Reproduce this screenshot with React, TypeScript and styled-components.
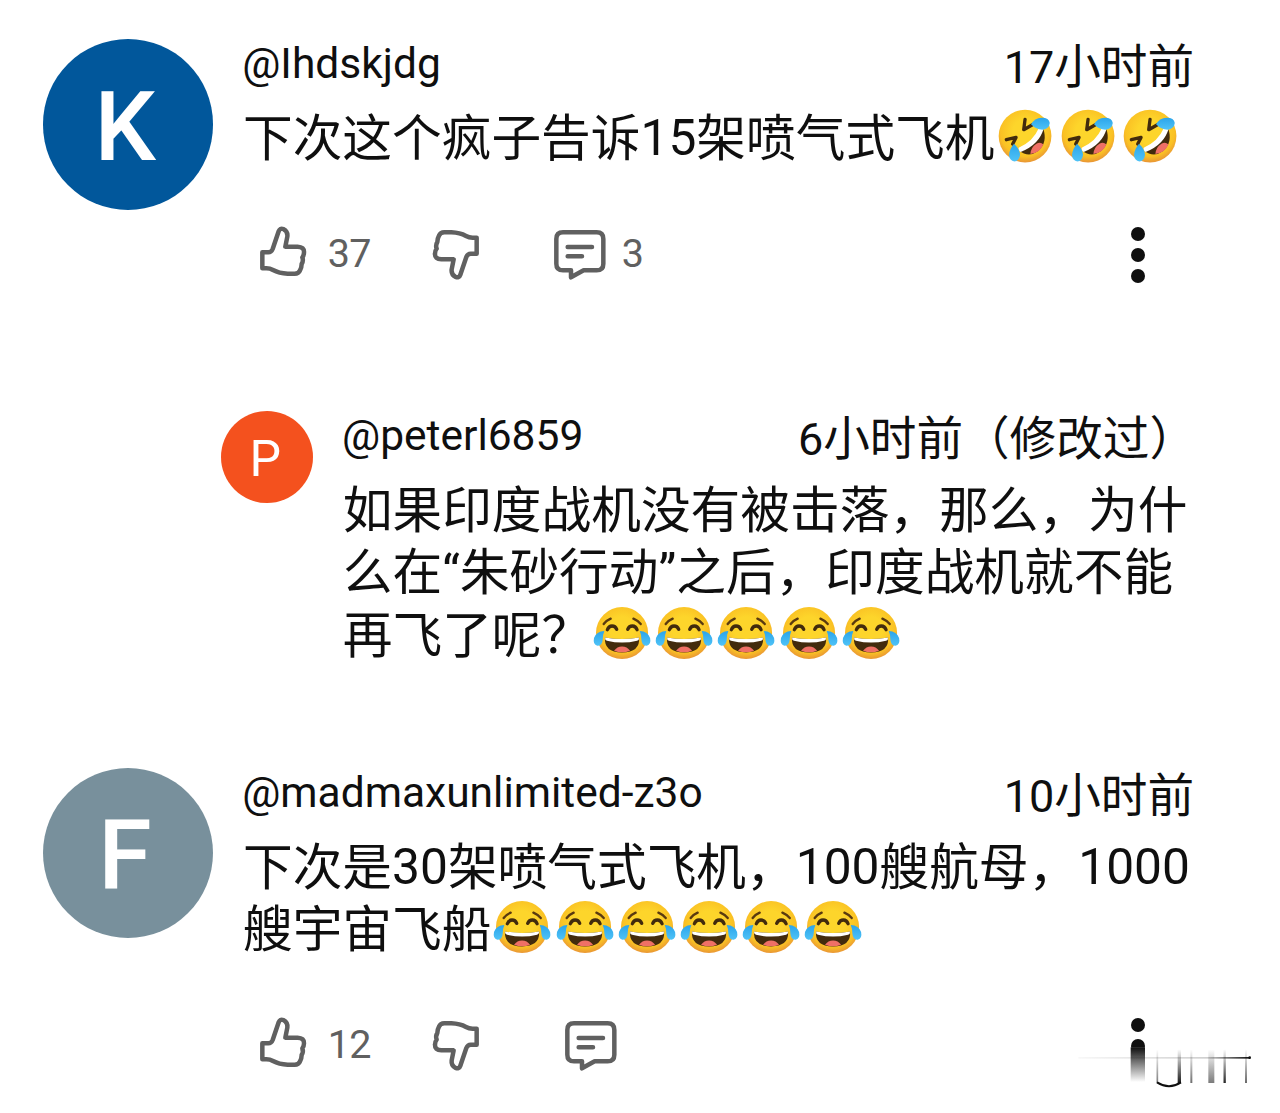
import React, { ReactNode } from 'react';
import styled, { createGlobalStyle } from 'styled-components';

const GlobalStyle = createGlobalStyle`
  body {
    margin: 0;
    background: #fff;
    color: #0f0f0f;
    font-family: Roboto, 'Noto Sans CJK SC', sans-serif;
  }
`;

const Page = styled.main`
  position: relative;
  box-sizing: border-box;
  width: 1280px;
  height: 1113px;
  padding: 39px 86px 0 42.7px;
  overflow: hidden;
`;

const Thread = styled.article<{ $reply?: boolean; $height: number }>`
  display: flex;
  align-items: flex-start;
  gap: 29px;
  height: ${({ $height }) => $height}px;
  padding-left: ${({ $reply }) => ($reply ? 178 : 0)}px;
`;

const Avatar = styled.div<{ $color: string; $size: number; $letter: number; $weight?: number }>`
  flex: none;
  display: flex;
  align-items: center;
  justify-content: center;
  box-sizing: border-box;
  width: ${({ $size }) => $size}px;
  height: ${({ $size }) => $size}px;
  padding: ${({ $letter }) => `${$letter * 0.06}px ${$letter * 0.06}px 0 0`};
  border-radius: 50%;
  background: ${({ $color }) => $color};
  color: #fff;
  font-size: ${({ $letter }) => $letter}px;
  font-weight: ${({ $weight = 500 }) => $weight};
  line-height: 1;
`;

const Content = styled.div`
  flex: 1;
  min-width: 0;
`;

const Header = styled.header`
  display: flex;
  align-items: flex-start;
  justify-content: space-between;
  height: 54px;
  white-space: nowrap;
`;

const Author = styled.span`
  font-size: 42.5px;
  line-height: 50px;
`;

const Time = styled.time<{ $shift?: number }>`
  margin-right: ${({ $shift = 0 }) => -$shift}px;
  font-size: 46.6px;
  line-height: 56px;
`;

const Body = styled.div`
  padding: 12px 0 0 0.8px;
  font-size: 49.7px;
`;

const Line = styled.div`
  display: flex;
  align-items: center;
  height: 62.3px;
  line-height: 62px;
  white-space: nowrap;
`;

const Text = styled.span`
  padding-top: 6px;
`;

const Digits = styled.span`
  vertical-align: 1.5px;
  line-height: 1;
`;

const TimeDigits = styled.span`
  font-size: 45px;
`;

const Actions = styled.footer`
  display: flex;
  align-items: center;
  height: 64px;
  margin-top: 56px;
  padding-left: 15.6px;
`;

const Action = styled.div<{ $width: number; $gap?: number }>`
  display: flex;
  align-items: center;
  gap: ${({ $gap = 20 }) => $gap}px;
  width: ${({ $width }) => $width}px;
  color: #606060;
`;

const Count = styled.span`
  padding-bottom: 3px;
  font-size: 39.5px;
  line-height: 48px;
  letter-spacing: -0.8px;
`;

const More = styled.div`
  display: flex;
  flex-direction: column;
  gap: 7px;
  margin-left: auto;
  margin-right: 49px;
`;

const Dot = styled.i`
  width: 14px;
  height: 14px;
  border-radius: 50%;
  background: #0f0f0f;
`;

const EmojiSvg = styled.svg`
  flex: none;
  display: block;
  width: 62.1px;
  height: 62.1px;
`;

const IconSvg = styled.svg<{ $raised?: boolean; $flip?: boolean }>`
  flex: none;
  display: block;
  margin-bottom: ${({ $raised }) => ($raised ? 9 : 0)}px;
  fill: none;
  stroke: currentColor;
  stroke-width: 13.5;
  stroke-linecap: round;
  stroke-linejoin: round;
  transform: ${({ $flip }) => ($flip ? 'rotate(180deg)' : 'none')};
`;

const Smear = styled.svg`
  position: absolute;
  left: 1075px;
  top: 1046px;
`;

const Thumb = ({ flip }: { flip?: boolean }) => (
  <IconSvg $flip={flip} $raised={!flip} width="50" height="52" viewBox="53 27 150 156">
    <path d="M66 109H84Q93 109 97 99L115 46Q119 35 129 39Q143 46 141 62L135 92H172Q192 93 191 109Q191 118 186 124Q190 134 184 144Q184 154 179 163Q175 173 163 173H142Q116 172 98 162Q89 157 78 157H66Z" />
  </IconSvg>
);

const CommentIcon = () => (
  <IconSvg width="54" height="52" viewBox="939 44 162 156">
    <path d="M969 54H1070Q1090 54 1090 74V148Q1090 168 1070 168H1031L993 189V168H969Q949 168 949 148V74Q949 54 969 54Z" />
    <path d="M983 98H1056M983 126H1026" />
  </IconSvg>
);

const EmojiDefs = () => (
  <svg width="0" height="0" style={{ position: 'absolute' }}>
    <defs>
      <radialGradient id="face" cx="50%" cy="42%" r="58%">
        <stop offset="0.4" stopColor="#fdd52b" />
        <stop offset="0.8" stopColor="#fac124" />
        <stop offset="1" stopColor="#e99635" />
      </radialGradient>
      <linearGradient id="tear" x1="0" y1="0" x2="0" y2="1">
        <stop offset="0" stopColor="#2ba4ea" />
        <stop offset="1" stopColor="#4fc3f7" />
      </linearGradient>
    </defs>
  </svg>
);

const Joy = () => (
  <EmojiSvg viewBox="0 0 186 186">
    <circle cx="93" cy="93" r="78" fill="url(#face)" />
    <path d="M38 66Q45 56 59 50M127 50Q141 56 149 66" fill="none" stroke="#5a3a10" strokeWidth="7" strokeLinecap="round" />
    <path d="M49 83Q53 72 63 72Q73 72 77 82M110 82Q114 72 124 72Q134 72 138 83" fill="none" stroke="#422b0d" strokeWidth="10" strokeLinecap="round" />
    <path d="M42 106Q93 116 144 106Q148 150 93 151Q38 150 42 106Z" fill="#422b0d" />
    <path d="M42 106Q93 115 144 106Q145 113 138 116Q93 127 48 116Q41 113 42 106Z" fill="#fff" />
    <path d="M69 146Q78 133 93 133Q108 133 117 146Q93 155 69 146Z" fill="#ef7066" />
    <path d="M40 87Q16 88 9 108Q5 128 19 131Q34 131 35 113Q35 98 40 87Z" fill="url(#tear)" />
    <path d="M146 87Q170 88 177 108Q181 128 167 131Q152 131 151 113Q151 98 146 87Z" fill="url(#tear)" />
  </EmojiSvg>
);

const Rofl = () => (
  <EmojiSvg viewBox="0 0 186 186">
    <circle cx="93" cy="93" r="79" fill="url(#face)" />
    <path d="M37 104L66 97L56 117M93 43L89 74L115 59" fill="none" stroke="#422b0d" strokeWidth="10" strokeLinecap="round" strokeLinejoin="round" />
    <path d="M75 136Q128 118 147 70Q162 112 132 138Q103 159 75 136Z" fill="#422b0d" />
    <path d="M109 147Q110 127 127 116Q139 109 148 118Q138 143 109 147Z" fill="#ef7066" />
    <path d="M74 128Q117 110 134 70H149Q136 119 80 141Q72 136 74 128Z" fill="#fff" />
    <path d="M111 58Q121 39 143 38Q165 38 167 54Q166 71 145 74Q126 74 111 58Z" fill="url(#tear)" />
    <path d="M60 116Q78 133 78 150Q75 169 61 169Q47 168 45 150Q46 132 60 116Z" fill="url(#tear)" />
  </EmojiSvg>
);

const repeat = (count: number, node: (key: number) => ReactNode) =>
  Array.from({ length: count }, (_, i) => node(i));

interface ActionBarProps {
  likes: number;
  replies?: number;
}

const ActionBar = ({ likes, replies }: ActionBarProps) => (
  <Actions>
    <Action $width={173}>
      <Thumb />
      <Count>{likes}</Count>
    </Action>
    <Action $width={replies ? 122 : 133}>
      <Thumb flip />
    </Action>
    <Action $width={110} $gap={15}>
      <CommentIcon />
      {replies && <Count>{replies}</Count>}
    </Action>
    <More>
      <Dot />
      <Dot />
      <Dot />
    </More>
  </Actions>
);

const bars = [
  { x: 292, w: 5, o: 0.55 },
  { x: 358, w: 10, o: 0.95 },
  { x: 394, w: 6, o: 0.6 },
  { x: 454, w: 18, o: 0.55 },
  { x: 494, w: 7, o: 0.9 },
  { x: 558, w: 5, o: 0.75 },
];

const Watermark = () => (
  <Smear width="180" height="44" viewBox="45 138 540 132">
    <defs>
      <linearGradient id="down" x1="0" y1="0" x2="0" y2="1">
        <stop offset="0" stopColor="#0f0f0f" />
        <stop offset="1" stopColor="#0f0f0f" stopOpacity="0" />
      </linearGradient>
      <linearGradient id="up" x1="0" y1="0" x2="0" y2="1">
        <stop offset="0" stopColor="#0f0f0f" stopOpacity="0" />
        <stop offset="1" stopColor="#0f0f0f" />
      </linearGradient>
      <linearGradient id="across" x1="0" y1="0" x2="1" y2="0">
        <stop offset="0" stopColor="#0f0f0f" stopOpacity="0.03" />
        <stop offset="0.75" stopColor="#0f0f0f" stopOpacity="0.2" />
        <stop offset="1" stopColor="#0f0f0f" />
      </linearGradient>
    </defs>
    <rect x="200" y="143" width="70" height="127" fill="#fff" />
    <rect x="212" y="142" width="43" height="104" fill="url(#down)" />
    <rect x="55" y="171" width="515" height="5" fill="url(#across)" />
    <circle cx="569" cy="173" r="4" fill="#0f0f0f" />
    {bars.map(({ x, w, o }) => (
      <rect key={x} x={x - w / 2} y="148" width={w} height="101" fill="url(#up)" opacity={o} />
    ))}
    <path d="M291 247Q327 270 363 247" fill="none" stroke="#0f0f0f" strokeWidth="6" />
  </Smear>
);

const App = () => {
  return (
    <Page lang="zh-CN">
      <GlobalStyle />
      <EmojiDefs />
      <Thread $height={372}>
        <Avatar $color="#01579b" $size={170.5} $letter={97}>K</Avatar>
        <Content>
          <Header>
            <Author>@Ihdskjdg</Author>
            <Time><TimeDigits>17</TimeDigits>小时前</Time>
          </Header>
          <Body>
            <Line>
              <Text>下次这个疯子告诉<Digits>15</Digits>架喷气式飞机</Text>
              {repeat(3, (key) => <Rofl key={key} />)}
            </Line>
          </Body>
          <ActionBar likes={37} replies={3} />
        </Content>
      </Thread>
      <Thread $reply $height={356.8}>
        <Avatar $color="#f4511e" $size={92.3} $letter={50} $weight={400}>P</Avatar>
        <Content>
          <Header>
            <Author>@peterl6859</Author>
            <Time $shift={2}><TimeDigits>6</TimeDigits>小时前（修改过）</Time>
          </Header>
          <Body>
            <Line><Text>如果印度战机没有被击落，那么，为什</Text></Line>
            <Line><Text>么在“朱砂行动”之后，印度战机就不能</Text></Line>
            <Line>
              <Text>再飞了呢？</Text>
              {repeat(5, (key) => <Joy key={key} />)}
            </Line>
          </Body>
        </Content>
      </Thread>
      <Thread $height={345}>
        <Avatar $color="#78909c" $size={170.5} $letter={97}>F</Avatar>
        <Content>
          <Header>
            <Author>@madmaxunlimited-z3o</Author>
            <Time><TimeDigits>10</TimeDigits>小时前</Time>
          </Header>
          <Body>
            <Line>
              <Text>
                下次是<Digits>30</Digits>架喷气式飞机，<Digits>100</Digits>艘航母，<Digits>1000</Digits>
              </Text>
            </Line>
            <Line>
              <Text>艘宇宙飞船</Text>
              {repeat(6, (key) => <Joy key={key} />)}
            </Line>
          </Body>
          <ActionBar likes={12} />
        </Content>
      </Thread>
      <Watermark />
    </Page>
  );
};

export default App;
